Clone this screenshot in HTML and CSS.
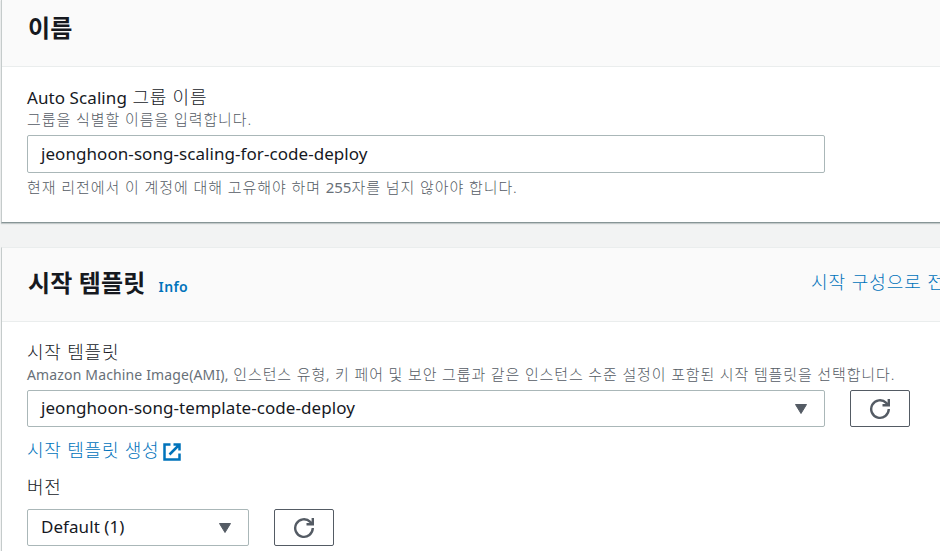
FILE: index.html
```html
<!DOCTYPE html>
<html lang="ko">
<head>
<meta charset="utf-8">
<title>Auto Scaling</title>
<link rel="stylesheet" href="styles.css">
</head>
<body>
<main class="page">
  <section class="panel panel-name">
    <header class="panel-header"><h2>이름</h2></header>
    <div class="panel-body">
      <label class="label"><span class="latin-label">Auto Scaling</span> 그룹 이름</label>
      <p class="desc">그룹을 식별할 이름을 입력합니다.</p>
      <div class="field field-input"><span>jeonghoon-song-scaling-for-code-deploy</span></div>
      <p class="hint">현재 리전에서 이 계정에 대해 고유해야 하며 <span class="latin-number">255</span>자를 넘지 않아야 합니다.</p>
    </div>
  </section>
  <section class="panel panel-template">
    <header class="panel-header">
      <h2>시작 템플릿</h2><a class="info">Info</a>
      <a class="switch">시작 구성으로 전</a>
    </header>
    <div class="panel-body">
      <label class="label">시작 템플릿</label>
      <p class="desc"><span class="latin-desc">Amazon Machine Image(AMI),</span> 인스턴스 유형, 키 페어 및 보안 그룹과 같은 인스턴스 수준 설정이 포함된 시작 템플릿을 선택합니다.</p>
      <div class="row">
        <div class="field field-select"><span>jeonghoon-song-template-code-deploy</span><svg class="caret" viewBox="0 0 14 12"><path d="M1.5 1.5h11L7 10.5z"/></svg></div>
        <button class="refresh" aria-label="새로 고침"><svg viewBox="0 0 22 22"><path d="M19.800 11a8.800 8.800 0 1 1-2.600-6.200L19 6.600"/><path d="M19.800 1V7.200H13.500"/></svg></button>
      </div>
      <a class="create"><span>시작 템플릿 생성</span><svg class="external" viewBox="0 0 18 18"><path d="M7.500 1.500h-6v15h15v-6M10.500 1.500h6v6M16 2L6.500 11.500"/></svg></a>
      <label class="label label-version">버전</label>
      <div class="row">
        <div class="field field-version"><span>Default (1)</span><svg class="caret" viewBox="0 0 14 12"><path d="M1.500 1.500h11L7 10.500z"/></svg></div>
        <button class="refresh" aria-label="새로 고침"><svg viewBox="0 0 22 22"><path d="M19.800 11a8.800 8.800 0 1 1-2.600-6.200L19 6.600"/><path d="M19.800 1V7.200H13.500"/></svg></button>
      </div>
    </div>
  </section>
</main>
</body>
</html>
```
FILE: styles.css
```css
* { box-sizing: border-box; }
body {
  margin: 0;
  background: #f2f3f3;
  color: #16191f;
  font-family: "Noto Sans", "Noto Sans CJK KR", sans-serif;
  overflow: hidden;
}
.page { height: 551px; overflow: hidden; white-space: nowrap; }
.panel {
  margin-left: 1px;
  background: #fff;
  border-left: 1px solid #c5cbcb;
}
.panel-name { height: 223px; border-bottom: 1px solid #879596; box-shadow: 0 1px 1px #c3c9c9; margin-bottom: 24px; }
.panel-template { height: 320px; border-top: 1px solid #eaeded; }
.panel-header {
  display: flex;
  height: 67px;
  padding-left: 26px;
  background: #fafafa;
  border-bottom: 1px solid #eaeded;
}
.panel-template .panel-header { height: 74px; }
h2 { margin: 0; font-size: 24px; font-weight: 700; line-height: 36px; padding-top: 10px; letter-spacing: 0.15px; }
.panel-template h2 { padding-top: 17px; }
.info { font-size: 14px; font-weight: 600; letter-spacing: 0.4px; color: #0073bb; line-height: 20px; margin: 29px 0 0 13px; }
.switch { margin: 22px 0 0 auto; width: 129px; color: #0073bb; font-size: 18px; font-weight: 300; line-height: 24px; letter-spacing: 0.95px; overflow: hidden; }
.panel-body { padding: 18px 0 0 25px; }
.label { display: block; height: 24px; font-size: 18px; line-height: 24px; letter-spacing: 0.8px; }
.label, .desc, .hint, .create { font-weight: 300; }
.desc, .hint { margin: 0; font-size: 15px; line-height: 20px; letter-spacing: 0.92px; color: #545b64; }
.desc { height: 26px; }
.panel-template .desc { letter-spacing: 0.86px; }
.hint { margin-top: 4px; }
.latin-label, .latin-desc, .latin-number { font-weight: 400; }
.latin-label { font-size: 17px; letter-spacing: 0.08px; }
.latin-desc { font-size: 14px; letter-spacing: 0.15px; color: #687078; }
.latin-number { letter-spacing: 0; color: #687078; }
.field {
  display: flex;
  align-items: center;
  justify-content: space-between;
  height: 37px;
  padding: 0 16px 0 13px;
  border: 1px solid #aab7b8;
  border-radius: 2px;
  font-size: 17px;
  line-height: 24px;
  letter-spacing: 0.06px;
}
.field-input, .field-select { width: 798px; }
.field-input { height: 38px; }
.field-select, .field-version { padding-bottom: 1px; }
.field-version { width: 222px; }
.row { display: flex; gap: 25px; }
.caret { width: 14px; height: 12px; margin-top: 1px; fill: #545b64; stroke: #545b64; stroke-linejoin: round; }
.refresh {
  display: flex;
  align-items: center;
  justify-content: center;
  width: 60px;
  height: 37px;
  padding: 0;
  background: #fff;
  border: 1px solid #545b64;
  border-radius: 2px;
}
.refresh svg { width: 22px; height: 22px; fill: none; stroke: #545b64; stroke-width: 2.4; }
.create { display: flex; gap: 4px; height: 24px; margin-top: 11px; font-size: 18px; line-height: 24px; letter-spacing: 0.8px; color: #0073bb; }
.external { width: 18px; height: 18px; margin-top: 5px; fill: none; stroke: #0073bb; stroke-width: 2.5; }
.label-version { margin-top: 13px; height: 23px; margin-bottom: 11px; }
```
